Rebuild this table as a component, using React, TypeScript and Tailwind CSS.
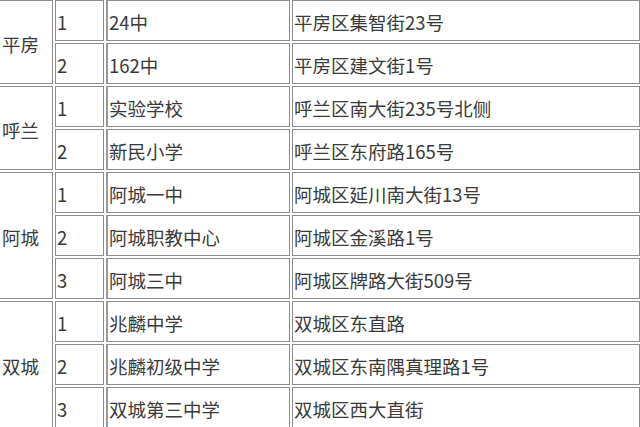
const groups = [
  {
    name: "平房",
    rows: [
      ["1", "24中", "平房区集智街23号"],
      ["2", "162中", "平房区建文街1号"],
    ],
  },
  {
    name: "呼兰",
    rows: [
      ["1", "实验学校", "呼兰区南大街235号北侧"],
      ["2", "新民小学", "呼兰区东府路165号"],
    ],
  },
  {
    name: "阿城",
    rows: [
      ["1", "阿城一中", "阿城区延川南大街13号"],
      ["2", "阿城职教中心", "阿城区金溪路1号"],
      ["3", "阿城三中", "阿城区牌路大街509号"],
    ],
  },
  {
    name: "双城",
    rows: [
      ["1", "兆麟中学", "双城区东直路"],
      ["2", "兆麟初级中学", "双城区东南隅真理路1号"],
      ["3", "双城第三中学", "双城区西大直街"],
    ],
  },
];

const cell = "border border-[#8c8c8c] align-middle px-[1px] pt-[3px] pb-0 h-[41px] box-border";

export default function App() {
  return (
    <div className="w-[640px] h-[427px] overflow-hidden bg-white">
      <table
        className="border-separate border-spacing-[2px] -mt-[2px] -ml-[5px] text-[18.5px] leading-[20px] text-[#3a3a3a] w-[647px] table-fixed"
        style={{ fontFamily: '"Noto Sans CJK SC", "Noto Sans", sans-serif' }}
      >
        <colgroup>
          <col className="w-[56px]" />
          <col className="w-[49px]" />
          <col className="w-[184px]" />
          <col />
        </colgroup>
        <tbody>
          {groups.map((g) =>
            g.rows.map((r, i) => (
              <tr key={g.name + i} className="h-[41px]">
                {i === 0 && (
                  <td rowSpan={g.rows.length} className={cell + " pl-[4px]"}>
                    {g.name}
                  </td>
                )}
                <td className={cell}>{r[0]}</td>
                <td className={cell + " border-l-2 border-l-[#9a9a9a]"}>{r[1]}</td>
                <td className={cell}>{r[2]}</td>
              </tr>
            ))
          )}
        </tbody>
      </table>
    </div>
  );
}
